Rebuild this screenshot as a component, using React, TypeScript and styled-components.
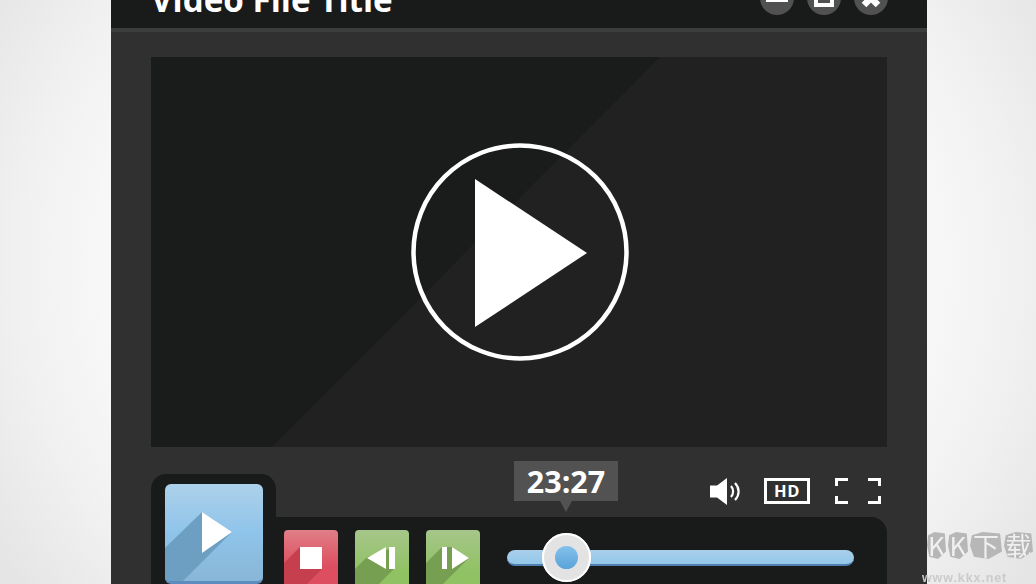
import React from 'react'
import styled, { createGlobalStyle } from 'styled-components'

const GlobalStyle = createGlobalStyle`
  html, body {
    margin: 0;
    padding: 0;
    height: 100%;
    overflow: hidden;
  }
  body {
    font-family: "Open Sans", "Liberation Sans", sans-serif;
  }
`

const Page = styled.div`
  position: relative;
  width: 1036px;
  height: 584px;
  overflow: hidden;
  padding-left: 111px;
  box-sizing: border-box;
  background: radial-gradient(ellipse 620px 560px at 50% 46%, #fdfdfd 55%, #f1f1f1 80%, #e4e4e4 100%);
`

const PlayerWindow = styled.div`
  width: 816px;
  height: 584px;
  background: #303030;
  display: flex;
  flex-direction: column;
`

const TitleBar = styled.header`
  height: 28px;
  flex: none;
  padding: 0 39px 0 40px;
  background: #191a1a;
  border-bottom: 4px solid #3b3c3c;
  display: flex;
  align-items: flex-end;
  justify-content: space-between;
`

const Title = styled.h1`
  margin: 0 0 8px;
  font-size: 33.2px;
  line-height: 40px;
  font-weight: 700;
  color: #fff;
  white-space: nowrap;
`

const WindowButtons = styled.div`
  display: flex;
  gap: 13px;
  margin-bottom: 13px;
`

const WindowButton = styled.button`
  width: 34px;
  height: 34px;
  padding: 0;
  border: 0;
  border-radius: 50%;
  background: #515151;
  display: flex;
  align-items: center;
  justify-content: center;
`

const Stage = styled.div`
  flex: 1;
  padding: 25px 40px 0;
  display: flex;
  flex-direction: column;
`

const VideoArea = styled.div`
  position: relative;
  height: 390px;
  flex: none;
  display: flex;
  align-items: center;
  justify-content: center;
  background: #212121;
`

const VideoShade = styled.svg`
  position: absolute;
  left: 0;
  top: 0;
  width: 736px;
  height: 390px;
`

const BigPlay = styled.svg`
  position: relative;
  width: 220px;
  height: 220px;
  margin-left: 1px;
  margin-top: -1px;
`

const Controls = styled.div`
  margin-top: 27px;
  height: 110px;
  flex: none;
  display: flex;
`

const PlayTab = styled.div`
  width: 125px;
  flex: none;
  padding: 10px 13px 0 14px;
  box-sizing: border-box;
  background: #191a1a;
  border-radius: 15px 15px 0 0;
`

const PlayButton = styled.button`
  position: relative;
  width: 98px;
  height: 100px;
  padding: 0;
  border: 0;
  border-bottom: 3px solid #5b8cbd;
  border-radius: 6px;
  overflow: hidden;
  display: block;
  box-sizing: border-box;
  background: linear-gradient(#add1ea 0%, #8fc4ea 50%, #88b6d7 100%);
`

const ButtonArt = styled.svg`
  display: block;
  width: 100%;
  height: 100%;
`

const RightColumn = styled.div`
  flex: 1;
  display: flex;
  flex-direction: column;
`

const StatusRow = styled.div`
  height: 43px;
  flex: none;
  box-sizing: border-box;
  padding: 4px 6px 0 0;
  display: flex;
  align-items: flex-start;
  justify-content: flex-end;
`

const StatusIcon = styled.svg<{ $gap: number }>`
  display: block;
  flex: none;
  margin-left: ${p => p.$gap}px;
`

const HdBadge = styled.div`
  width: 46px;
  height: 26px;
  margin-left: 23px;
  box-sizing: border-box;
  border: 3px solid #fff;
  color: #fff;
  font-size: 16.5px;
  font-weight: 700;
  line-height: 20px;
  text-align: center;
  letter-spacing: 0.6px;
`

const Dock = styled.div`
  flex: 1;
  background: #191a1a;
  border-radius: 0 16px 0 0;
  padding: 13px 33px 0 8px;
  display: flex;
  align-items: flex-start;
`

const SmallButton = styled.button<{ $tone: 'red' | 'green' }>`
  width: 54px;
  height: 60px;
  flex: none;
  padding: 0;
  border: 0;
  margin-right: 17px;
  border-radius: 4px;
  overflow: hidden;
  background: ${p =>
    p.$tone === 'red'
      ? 'linear-gradient(#e07f88 0%, #dd4f60 60%)'
      : 'linear-gradient(#a6c68a 0%, #90c263 70%)'};
`

const Slider = styled.div`
  position: relative;
  flex: 1;
  height: 16px;
  margin: 20px 0 0 10px;
  box-sizing: border-box;
  border-radius: 8px;
  border-bottom: 2px solid #4f7fae;
  background: linear-gradient(#a9d0ea, #93c7ea);
`

const Thumb = styled.div`
  position: absolute;
  left: 35px;
  top: -17px;
  width: 49px;
  height: 49px;
  box-sizing: border-box;
  border-radius: 50%;
  border: 13px solid #e3e3e3;
  outline: 2px solid #fff;
  outline-offset: -2px;
  background: linear-gradient(#84c1ea, #5aa3da);
`

const TimeBubble = styled.div`
  position: absolute;
  left: 7px;
  top: -89px;
  width: 104px;
  height: 40px;
  background: #515251;
  color: #fff;
  font-size: 30.5px;
  font-weight: 700;
  line-height: 41px;
  text-align: center;

  &::after {
    content: '';
    position: absolute;
    left: 46px;
    top: 40px;
    border-style: solid;
    border-width: 11px 6px 0;
    border-color: #515251 transparent transparent;
  }
`

const Watermark = styled.div`
  position: absolute;
  left: 922px;
  top: 532px;
  width: 114px;
  filter: blur(0.5px);
`

const WatermarkTitle = styled.div`
  display: flex;
  gap: 2px;
  margin-left: 5px;
`

const WatermarkChar = styled.span<{ $width: number }>`
  width: ${p => p.$width}px;
  height: 27px;
  background: #b7b7b7;
  color: #f0f0f0;
  font-family: "Noto Sans CJK SC", "Open Sans", sans-serif;
  font-size: 26px;
  font-weight: 400;
  line-height: 26px;
  text-align: center;
  clip-path: polygon(6% 12%, 40% 0, 94% 6%, 100% 72%, 58% 100%, 12% 92%, 0 50%);
`

const WatermarkUrl = styled.div`
  margin-top: 13px;
  color: #cbcbcb;
  font-family: "Liberation Sans", sans-serif;
  font-size: 12.5px;
  font-weight: 700;
  letter-spacing: 0.9px;
  line-height: 12px;
`

const App = () => {
  return (
    <Page>
      <GlobalStyle />
      <PlayerWindow>
        <TitleBar>
          <Title>Video File Title</Title>
          <WindowButtons>
            <WindowButton aria-label="minimize">
              <svg width="34" height="34" viewBox="0 0 34 34">
                <rect x="6" y="16" width="22" height="5" fill="#fff" />
              </svg>
            </WindowButton>
            <WindowButton aria-label="maximize">
              <svg width="34" height="34" viewBox="0 0 34 34">
                <rect x="9" y="6" width="16" height="18" fill="none" stroke="#fff" strokeWidth="4" />
              </svg>
            </WindowButton>
            <WindowButton aria-label="close">
              <svg width="34" height="34" viewBox="0 0 34 34">
                <path d="M10 10l14 14M24 10L10 24" stroke="#fff" strokeWidth="6.5" fill="none" />
              </svg>
            </WindowButton>
          </WindowButtons>
        </TitleBar>
        <Stage>
          <VideoArea>
            <VideoShade viewBox="0 0 736 390">
              <polygon points="0,0 509,0 121,390 0,390" fill="#1a1c1b" />
            </VideoShade>
            <BigPlay viewBox="0 0 220 220">
              <circle cx="110" cy="110" r="106.5" fill="none" stroke="#fff" strokeWidth="4.5" />
              <polygon points="65,37 177,111 65,185" fill="#fff" />
            </BigPlay>
          </VideoArea>
          <Controls>
            <PlayTab>
              <PlayButton aria-label="play">
                <ButtonArt viewBox="0 0 98 97" preserveAspectRatio="none">
                  <polygon points="37,28 0,64 0,97 18,97 67,48" fill="#6c9fc2" />
                  <polygon points="37,28 67,48 37,69" fill="#fff" />
                </ButtonArt>
              </PlayButton>
            </PlayTab>
            <RightColumn>
              <StatusRow>
                <StatusIcon $gap={0} width="32" height="28" viewBox="0 0 32 28">
                  <polygon points="1,7.500 8,7.500 18,0 18,27 8,19.500 1,19.500" fill="#fff" />
                  <path d="M22 8c2.800 3 2.800 8 0 11" fill="none" stroke="#fff" strokeWidth="2.200" />
                  <path d="M26 5c4.800 5 4.800 12 0 17" fill="none" stroke="#fff" strokeWidth="2.200" />
                </StatusIcon>
                <HdBadge>HD</HdBadge>
                <StatusIcon $gap={25} width="46" height="26" viewBox="0 0 46 26">
                  <path
                    d="M13 1.500H1.500V8M33 1.500H44.500V8M13 24.500H1.500V18M33 24.500H44.500V18"
                    fill="none"
                    stroke="#fff"
                    strokeWidth="3"
                  />
                </StatusIcon>
              </StatusRow>
              <Dock>
                <SmallButton $tone="red" aria-label="stop">
                  <ButtonArt viewBox="0 0 54 60">
                    <polygon points="16,17 0,33 0,60 17,60 38,39" fill="#c63f4f" />
                    <rect x="16" y="17" width="22" height="22" fill="#fff" />
                  </ButtonArt>
                </SmallButton>
                <SmallButton $tone="green" aria-label="previous">
                  <ButtonArt viewBox="0 0 54 60">
                    <polygon points="12,27 0,39 0,60 18,60 40,38 40,17" fill="#779f52" />
                    <polygon points="12,28 31,17 31,39" fill="#fff" />
                    <rect x="34" y="17" width="6" height="22" fill="#fff" />
                  </ButtonArt>
                </SmallButton>
                <SmallButton $tone="green" aria-label="next">
                  <ButtonArt viewBox="0 0 54 60">
                    <polygon points="16,17 0,33 0,60 11,60 43,28 26,17" fill="#779f52" />
                    <rect x="16" y="17" width="5" height="22" fill="#fff" />
                    <polygon points="26,17 43,28 26,39" fill="#fff" />
                  </ButtonArt>
                </SmallButton>
                <Slider>
                  <TimeBubble>23:27</TimeBubble>
                  <Thumb />
                </Slider>
              </Dock>
            </RightColumn>
          </Controls>
        </Stage>
      </PlayerWindow>
      <Watermark>
        <WatermarkTitle>
          <WatermarkChar $width={19}>K</WatermarkChar>
          <WatermarkChar $width={20}>K</WatermarkChar>
          <WatermarkChar $width={32}>下</WatermarkChar>
          <WatermarkChar $width={29}>载</WatermarkChar>
        </WatermarkTitle>
        <WatermarkUrl>www.kkx.net</WatermarkUrl>
      </Watermark>
    </Page>
  )
}
export default App
